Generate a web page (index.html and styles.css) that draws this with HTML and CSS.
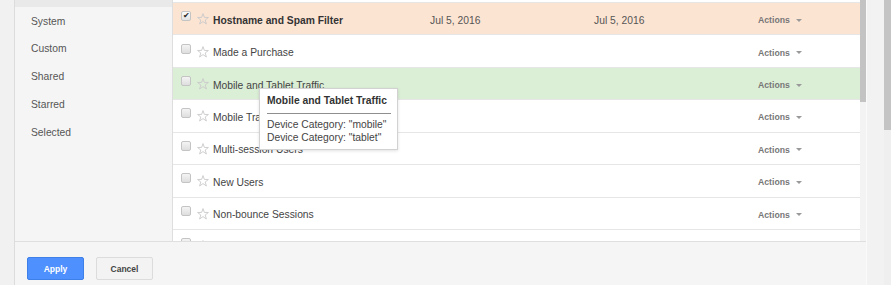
FILE: index.html
```html
<!DOCTYPE html>
<html>
<head>
<meta charset="utf-8">
<link rel="stylesheet" href="styles.css">
</head>
<body>
<svg width="0" height="0" class="defs"><defs><symbol id="star" viewBox="0 0 12 12"><polygon points="6,0.6 7.35,4.4 11.4,4.5 8.2,7 9.4,11 6,8.6 2.6,11 3.8,7 0.6,4.5 4.65,4.4" fill="none" stroke="#c9c9c9" stroke-width="0.9" stroke-linejoin="round"/></symbol></defs></svg>
<div class="strip"></div>
<div class="dialog">
  <div class="main">
    <ul class="nav">
      <li class="sel"></li>
      <li>System</li>
      <li>Custom</li>
      <li>Shared</li>
      <li>Starred</li>
      <li>Selected</li>
    </ul>
    <div class="table">
      <div class="rows">
        <div class="row prev"></div>
        <div class="row orange"><span class="cb checked">✔</span><svg class="star"><use href="#star"/></svg><span class="name bold">Hostname and Spam Filter</span><span class="date">Jul 5, 2016</span><span class="date">Jul 5, 2016</span><span class="act">Actions<i class="caret"></i></span></div>
        <div class="row"><span class="cb"></span><svg class="star"><use href="#star"/></svg><span class="name">Made a Purchase</span><span class="date"></span><span class="date"></span><span class="act">Actions<i class="caret"></i></span></div>
        <div class="row green"><span class="cb"></span><svg class="star"><use href="#star"/></svg><span class="name">Mobile and Tablet Traffic</span><span class="date"></span><span class="date"></span><span class="act">Actions<i class="caret"></i></span></div>
        <div class="row"><span class="cb"></span><svg class="star"><use href="#star"/></svg><span class="name">Mobile Traffic</span><span class="date"></span><span class="date"></span><span class="act">Actions<i class="caret"></i></span></div>
        <div class="row"><span class="cb"></span><svg class="star"><use href="#star"/></svg><span class="name">Multi-session Users</span><span class="date"></span><span class="date"></span><span class="act">Actions<i class="caret"></i></span></div>
        <div class="row"><span class="cb"></span><svg class="star"><use href="#star"/></svg><span class="name">New Users</span><span class="date"></span><span class="date"></span><span class="act">Actions<i class="caret"></i></span></div>
        <div class="row"><span class="cb"></span><svg class="star"><use href="#star"/></svg><span class="name">Non-bounce Sessions</span><span class="date"></span><span class="date"></span><span class="act">Actions<i class="caret"></i></span></div>
        <div class="row"><span class="cb"></span><svg class="star"><use href="#star"/></svg><span class="name">Non-Converters</span><span class="date"></span><span class="date"></span><span class="act">Actions<i class="caret"></i></span></div>
      </div>
    </div>
    <div class="vscroll"><div class="thumb"></div></div>
  </div>
  <div class="footer">
    <button class="btn apply">Apply</button>
    <button class="btn cancel">Cancel</button>
  </div>
</div>
<div class="gutter"></div>
<div class="pagescroll"><div class="pthumb"></div></div>

<div class="tooltip">
  <div class="tt-title">Mobile and Tablet Traffic</div>
  <div class="tt-line">Device Category: "mobile"</div>
  <div class="tt-line">Device Category: "tablet"</div>
</div>
</body>
</html>
```

FILE: styles.css
```css
* { box-sizing: border-box; }
html, body { margin: 0; padding: 0; }
body {
  width: 891px;
  height: 285px;
  overflow: hidden;
  display: flex;
  font-family: "Liberation Sans", Arial, sans-serif;
  font-size: 10.3px;
  color: #444;
  background: #fff;
  position: relative;
}
.defs { position: absolute; }
.strip {
  width: 15px;
  flex: none;
  background: #f1f1f1;
  border-right: 1px solid #dcdcdc;
}
.dialog {
  width: 851px;
  flex: none;
  display: flex;
  flex-direction: column;
  background: #f5f5f5;
}
.main {
  height: 241px;
  flex: none;
  display: flex;
  overflow: hidden;
}
.nav {
  list-style: none;
  margin: -20.6px 0 0 0;
  padding: 0;
  width: 158px;
  flex: none;
  border-right: 1px solid #dedede;
  background: #f5f5f5;
}
.nav li {
  height: 27.75px;
  display: flex;
  align-items: center;
  padding-left: 16px;
  color: #555;
}
.nav li.sel { background: #e9e9e9; }
.table {
  flex: 1;
  background: #fff;
  overflow: hidden;
}
.rows { margin-top: -29.43px; }
.row {
  height: 32.43px;
  border-bottom: 1px solid #e6e6e6;
  display: flex;
  align-items: center;
  padding-left: 8px;
  padding-top: 3px;
  background: #fff;
}
.row.orange { background: #fce4d3; }
.row.green { background: #dbeed6; }
.cb {
  width: 10px;
  height: 10px;
  flex: none;
  margin-right: 6px;
  margin-bottom: 8px;
  border: 1px solid #c4c4c4;
  border-radius: 2px;
  background: linear-gradient(#f4f4f4, #dedede);
  font-size: 8px;
  line-height: 8px;
  text-align: center;
  color: #222;
}
.cb.checked { background: linear-gradient(#fafafa, #e2e2e2); }
.star {
  width: 12px;
  height: 12px;
  flex: none;
  margin-right: 4px;
  margin-bottom: 2px;
}
.name {
  width: 217px;
  flex: none;
  color: #444;
  white-space: nowrap;
}
.name.bold { font-weight: bold; color: #333; }
.date {
  width: 164px;
  flex: none;
  color: #555;
}
.act {
  font-size: 8.7px;
  font-weight: bold;
  color: #777;
  display: flex;
  align-items: center;
}
.caret {
  display: inline-block;
  margin-left: 6px;
  width: 0;
  height: 0;
  border-left: 3px solid transparent;
  border-right: 3px solid transparent;
  border-top: 3px solid #999;
}
.vscroll {
  width: 6px;
  flex: none;
  background: #f3f3f3;
}
.vscroll .thumb {
  height: 102px;
  background: #c3c3c3;
}
.footer {
  flex: 1;
  border-top: 1px solid #dfdfdf;
  background: #f5f5f5;
  display: flex;
  align-items: flex-start;
  gap: 12px;
  padding: 15px 0 0 12px;
}
.btn {
  height: 23px;
  width: 57px;
  font-family: "Liberation Sans", Arial, sans-serif;
  font-size: 8.5px;
  font-weight: bold;
  border-radius: 2px;
  padding: 0;
}
.apply {
  background: #4d90fe;
  border: 1px solid #3f7fe8;
  color: #fff;
}
.cancel {
  background: #f3f3f3;
  border: 1px solid #dcdcdc;
  color: #444;
}
.gutter {
  width: 18px;
  flex: none;
  background: #f2f2f2;
  border-left: 1px solid #fafafa;
}
.pagescroll {
  flex: 1;
  background: #efefef;
}
.pthumb {
  height: 130px;
  background: #c4c4c4;
}
.tooltip {
  position: absolute;
  left: 259px;
  top: 88px;
  width: 139px;
  height: 62px;
  background: #fff;
  border: 1px solid #d2d2d2;
  box-shadow: 0 1px 3px rgba(0,0,0,0.12);
  padding: 6px 6px 0 7px;
}
.tt-title {
  font-weight: bold;
  color: #333;
  line-height: 12px;
  padding-bottom: 6px;
  border-bottom: 1px solid #8f8f8f;
  margin-bottom: 4px;
  white-space: nowrap;
}
.tt-line {
  line-height: 13px;
  color: #444;
  white-space: nowrap;
}
```
